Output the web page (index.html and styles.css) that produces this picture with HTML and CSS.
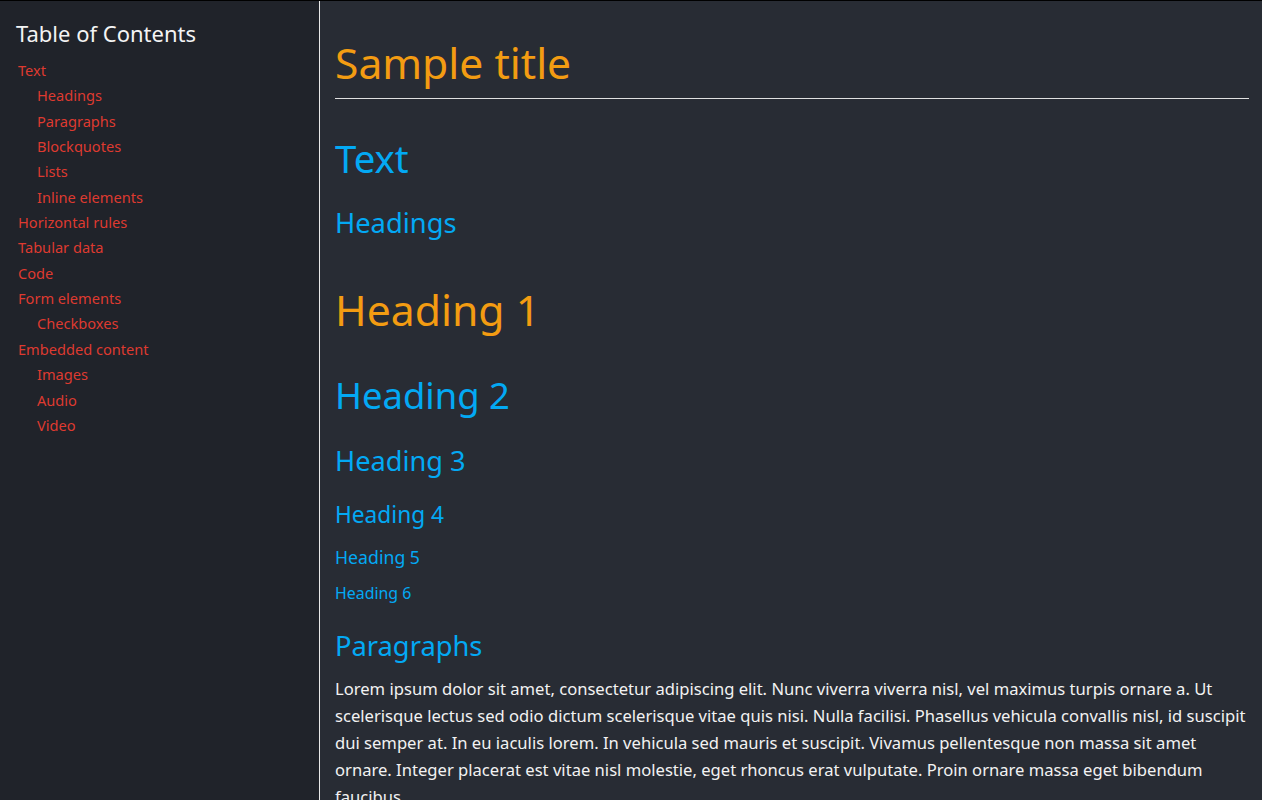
FILE: index.html
```html
<!DOCTYPE html>
<html lang="en">
<head>
<meta charset="utf-8">
<title>Sample title</title>
<link rel="stylesheet" href="styles.css">
</head>
<body>
<div class="layout">
  <nav class="toc">
    <h2 class="toc-title">Table of Contents</h2>
    <ul class="toc-list">
      <li><a href="#text">Text</a>
        <ul>
          <li><a href="#headings">Headings</a></li>
          <li><a href="#paragraphs">Paragraphs</a></li>
          <li><a href="#blockquotes">Blockquotes</a></li>
          <li><a href="#lists">Lists</a></li>
          <li><a href="#inline">Inline elements</a></li>
        </ul>
      </li>
      <li><a href="#hr">Horizontal rules</a></li>
      <li><a href="#tables">Tabular data</a></li>
      <li><a href="#code">Code</a></li>
      <li><a href="#forms">Form elements</a>
        <ul>
          <li><a href="#checkboxes">Checkboxes</a></li>
        </ul>
      </li>
      <li><a href="#embedded">Embedded content</a>
        <ul>
          <li><a href="#images">Images</a></li>
          <li><a href="#audio">Audio</a></li>
          <li><a href="#video">Video</a></li>
        </ul>
      </li>
    </ul>
  </nav>
  <main class="content">
    <h1 class="title">Sample title</h1>
    <h2 class="sec sec-text" id="text">Text</h2>
    <h3 class="sub sub-headings" id="headings">Headings</h3>
    <h1 class="h h1">Heading 1</h1>
    <h2 class="h h2">Heading 2</h2>
    <h3 class="h h3">Heading 3</h3>
    <h4 class="h h4">Heading 4</h4>
    <h5 class="h h5">Heading 5</h5>
    <h6 class="h h6">Heading 6</h6>
    <h3 class="sub sub-paragraphs" id="paragraphs">Paragraphs</h3>
    <p class="para">Lorem ipsum dolor sit amet, consectetur adipiscing elit. Nunc viverra viverra nisl, vel maximus turpis ornare a. Ut scelerisque lectus sed odio dictum scelerisque vitae quis nisi. Nulla facilisi. Phasellus vehicula convallis nisl, id suscipit dui semper at. In eu iaculis lorem. In vehicula sed mauris et suscipit. Vivamus pellentesque non massa sit amet ornare. Integer placerat est vitae nisl molestie, eget rhoncus erat vulputate. Proin ornare massa eget bibendum faucibus.</p>
  </main>
</div>
</body>
</html>
```

FILE: styles.css
```css
* { box-sizing: border-box; }
html, body { height: 100%; }
body {
  margin: 0;
  overflow: hidden;
  border-top: 1px solid #000;
  background: #282c34;
  font-family: "Noto Sans", "Open Sans", sans-serif;
  color: #f0f0f0;
}
.layout {
  display: flex;
  height: 100%;
}
.toc {
  flex: 0 0 320px;
  background: #20232a;
  border-right: 1px solid #e8e8e8;
  padding: 0 16px;
}
.toc-title {
  margin: 19px 0 0;
  font-size: 22px;
  line-height: 1.2;
  font-weight: 400;
  color: #f4f4f4;
}
.toc-list {
  list-style: none;
  margin: 11.5px 0 0 2px;
  padding: 0;
  font-size: 14.6px;
  line-height: 25.36px;
}
.toc-list ul {
  list-style: none;
  margin: 0;
  padding: 0 0 0 19px;
}
.toc-list a {
  color: #de3a30;
  text-decoration: none;
}
.content {
  flex: 1 1 auto;
  min-width: 0;
  padding: 0 13px 0 15px;
  overflow: hidden;
}
.content h1, .content h2, .content h3, .content h4, .content h5, .content h6 {
  font-weight: 400;
  line-height: 1.2;
  margin: 0;
}
.content .title {
  margin-top: 35.9px;
  font-size: 42.6px;
  color: #f39c12;
  padding-bottom: 10px;
  border-bottom: 1px solid #e0e0e0;
}
.content .sec {
  color: #03a9f4;
  font-size: 38.4px;
  margin-top: 36px;
}
.content .sub {
  color: #03a9f4;
  font-size: 27.3px;
}
.content .sub-headings { margin-top: 25.8px; }
.content .sub-paragraphs { margin-top: 26.6px; }
.content .h { color: #03a9f4; }
.content .h1 { color: #f39c12; font-size: 42.7px; margin-top: 44px; }
.content .h2 { font-size: 36.4px; margin-top: 39px; }
.content .h3 { font-size: 27.2px; margin-top: 27.4px; }
.content .h4 { font-size: 22.7px; margin-top: 23.9px; }
.content .h5 { font-size: 17.7px; margin-top: 18.7px; }
.content .h6 { font-size: 15.9px; margin-top: 15.6px; }
.para {
  margin: 12.7px 0 0;
  font-size: 16.6px;
  line-height: 27px;
  color: #f2f2f2;
}
```
